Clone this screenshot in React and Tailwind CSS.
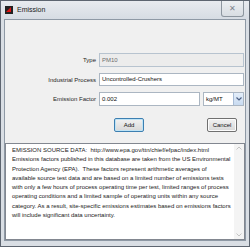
import React from "react";

const font = { fontFamily: '"Liberation Sans", Arial, sans-serif' };

const lines = [
  "EMISSION SOURCE DATA:\u00a0\u00a0http://www.epa.gov/ttn/chief/efpac/index.html",
  "Emissions factors published in this database are taken from the US Environmental",
  "Protection Agency (EPA).\u00a0\u00a0These factors represent arithmetic averages of",
  "available source test data and are based on a limited number of emissions tests",
  "with only a few hours of process operating time per test, limited ranges of process",
  "operating conditions and a limited sample of operating units within any source",
  "category. As a result, site-specific emissions estimates based on emissions factors",
  "will include significant data uncertainty.",
];

function Field({ label, children }) {
  return (
    <div className="flex items-center">
      <div className="w-[94px] pr-[3px] text-right text-[6px] text-[#1e1e1e] leading-none">{label}</div>
      {children}
    </div>
  );
}

function Btn({ children, focus }) {
  return (
    <button
      className={`h-[14px] w-[30px] rounded-[2px] border text-[6px] leading-none text-[#111] bg-gradient-to-b from-[#f2f2f2] to-[#d8d8d8] ${focus ? "border-[#3c7fb1] shadow-[inset_0_0_0_1px_#bfe3f5]" : "border-[#707070] shadow-[inset_0_0_0_1px_#fcfcfc]"}`}
    >
      {children}
    </button>
  );
}

export default function App() {
  return (
    <div style={font} className="w-[250px] h-[247px] bg-[#d9dee4] border border-[#5d6570] flex flex-col overflow-hidden relative">
      {/* title bar */}
      <div className="h-[18px] flex items-center pl-[4px] bg-gradient-to-b from-[#e8ebef] to-[#d6dce3] shrink-0">
        <div className="w-[8px] h-[8px] bg-[#222] relative overflow-hidden">
          <div className="absolute left-[1px] top-[1px] w-0 h-0 border-l-[5px] border-l-transparent border-b-[5px] border-b-[#d11]" />
        </div>
        <span className="ml-[4px] text-[7px] text-[#1a1a1a]">Emission</span>
        <div className="ml-auto mr-[5px] self-start w-[23px] h-[16px] rounded-b-[3px] border border-t-0 border-[#8d969f] bg-gradient-to-b from-[#eceff2] to-[#d8dde2] flex items-center justify-center text-[8px] text-[#7b838c] leading-none">
          ✕
        </div>
      </div>
      {/* client */}
      <div className="flex-1 mx-[3px] mb-[5px] bg-[#f0f0f0] border border-[#8e99a5] flex flex-col">
        <div className="pt-[33px] pr-[1px] flex flex-col gap-[6px]">
          <Field label="Type">
            <div className="flex-1 h-[14px] border border-[#b7c3cf] bg-[#ececec] px-[2px] flex items-center text-[6px] text-[#6d6d6d]">PM10</div>
          </Field>
          <Field label="Industrial Process">
            <div className="flex-1 h-[13px] border border-[#abb6c2] bg-white px-[2px] flex items-center text-[6px] text-[#111]">Uncontrolled-Crushers</div>
          </Field>
          <Field label="Emission Factor">
            <div className="w-[101px] h-[14px] border border-[#abb6c2] bg-white px-[2px] flex items-center text-[6px] text-[#111]">0.002</div>
            <div className="ml-[3px] flex-1 h-[14px] border border-[#abb6c2] bg-white flex items-center text-[6px] text-[#111]">
              <span className="pl-[2px] flex-1">kg/MT</span>
              <div className="w-[10px] h-full bg-gradient-to-b from-[#e4eefa] to-[#c8daf0] border-l border-[#a8bcd6] flex items-center justify-center">
                <svg width="6" height="4" viewBox="0 0 6 4"><path d="M0.5 0.5 L3 3 L5.5 0.5" fill="none" stroke="#4d6185" strokeWidth="1.2" /></svg>
              </div>
            </div>
          </Field>
          <div className="flex mt-[-2px]">
            <div className="ml-[109px]"><Btn focus>Add</Btn></div>
            <div className="ml-[63px]"><Btn>Cancel</Btn></div>
          </div>
        </div>
        <div className="mt-auto h-[97px] border border-[#828790] bg-white flex">
          <div className="flex-1 pl-[6px] pt-[2px] text-[6px] leading-[9.3px] text-[#222] whitespace-nowrap overflow-hidden">
            {lines.map((l) => (
              <div key={l}>{l}</div>
            ))}
          </div>
          <div className="w-[10px] bg-[#f4f4f4] flex flex-col justify-between items-center py-[2px]">
            <svg width="6" height="4" viewBox="0 0 6 4"><path d="M0.5 3.5 L3 1 L5.5 3.5" fill="none" stroke="#c4c4c4" strokeWidth="1" /></svg>
            <svg width="6" height="4" viewBox="0 0 6 4"><path d="M0.5 0.5 L3 3 L5.5 0.5" fill="none" stroke="#c4c4c4" strokeWidth="1" /></svg>
          </div>
        </div>
      </div>
    </div>
  );
}
